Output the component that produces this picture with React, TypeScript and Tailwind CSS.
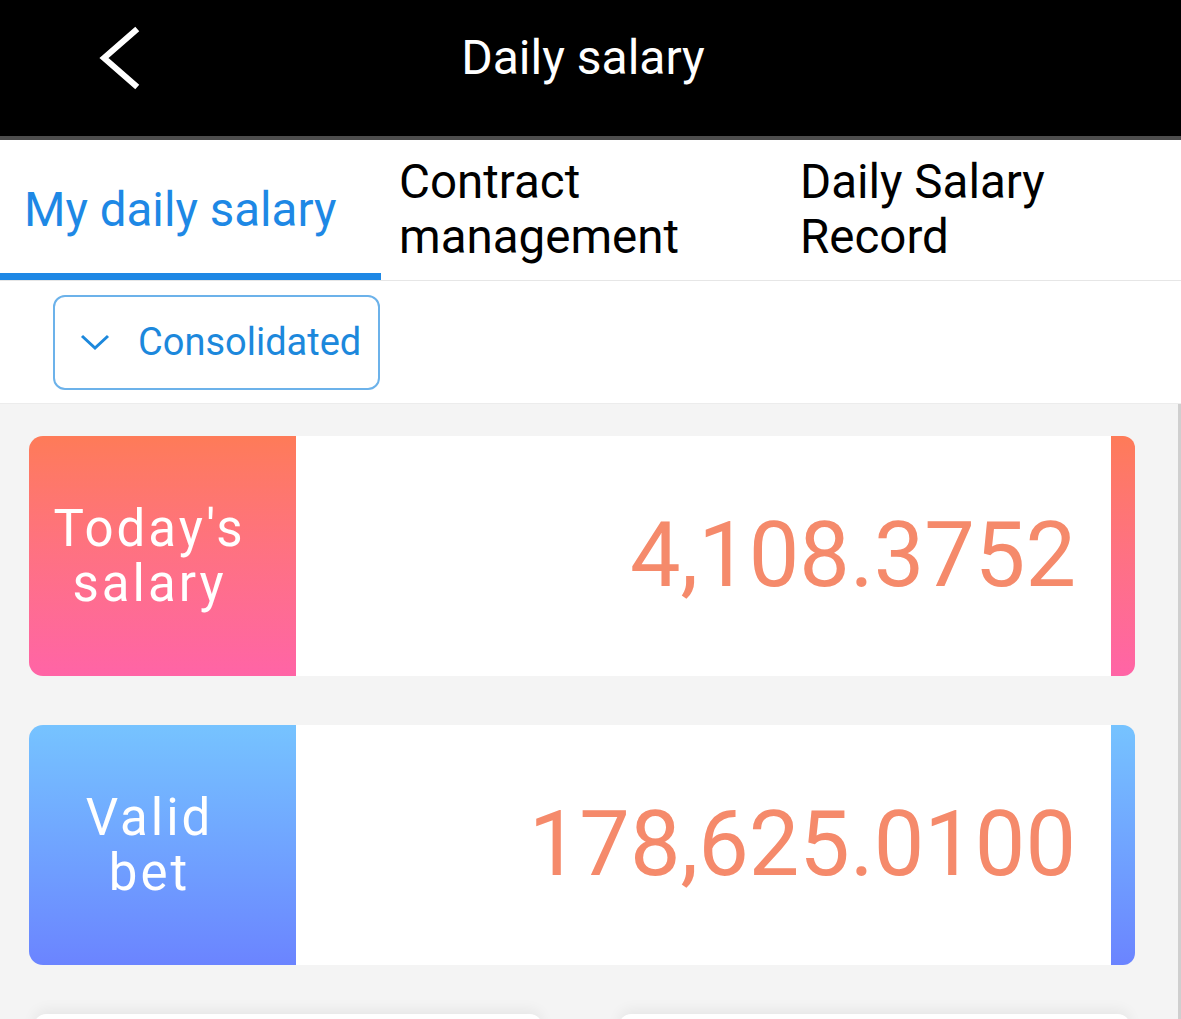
import React from "react";

const cards = [
  {
    label: ["Today's", "salary"],
    value: "4,108.3752",
    grad: "bg-gradient-to-b from-[#fe7b58] to-[#ff64a6]",
  },
  {
    label: ["Valid", "bet"],
    value: "178,625.0100",
    grad: "bg-gradient-to-b from-[#76c3ff] to-[#6b84ff]",
  },
];

export default function App() {
  return (
    <div className="w-[1181px] h-[1019px] overflow-hidden bg-[#f4f4f4] font-['Roboto','Liberation_Sans',sans-serif] flex flex-col">
      {/* header */}
      <div className="h-[136px] shrink-0 bg-black relative flex items-center justify-center pb-[20px] pr-[15px]">
        <svg className="absolute left-[96px] top-[24px]" width="48" height="68" viewBox="0 0 48 68" fill="none">
          <path d="M39 7 L8 34 L39 61" stroke="white" strokeWidth="6" strokeLinecap="square" strokeLinejoin="miter" />
        </svg>
        <h1 className="text-white text-[48px] leading-none">Daily salary</h1>
      </div>
      <div className="h-[4px] shrink-0 bg-[#4d4d4d]" />

      {/* tabs */}
      <div className="h-[141px] shrink-0 bg-white flex border-b border-[#e6e6e6]">
        <div className="w-[381px] relative flex items-center pl-[24px]">
          <span className="text-[#1e88e5] text-[47.5px] leading-[55px]">My daily salary</span>
          <div className="absolute left-0 right-0 bottom-0 h-[7px] bg-[#1e88e5]" />
        </div>
        <div className="w-[400px] flex items-center pl-[18px]">
          <span className="text-black text-[47.5px] leading-[55px]">Contract<br />management</span>
        </div>
        <div className="flex-1 flex items-center pl-[19px]">
          <span className="text-black text-[47.5px] leading-[55px]">Daily Salary<br />Record</span>
        </div>
      </div>

      {/* filter */}
      <div className="h-[123px] shrink-0 bg-white border-b border-[#ececec] flex items-center pl-[53px]">
        <button className="w-[327px] h-[95px] rounded-[12px] border-2 border-[#6cb2ea] flex items-center pl-[25px] gap-[28px]">
          <svg width="30" height="18" viewBox="0 0 30 18" fill="none">
            <path d="M2 3 L15 15 L28 3" stroke="#1c88dc" strokeWidth="3" />
          </svg>
          <span className="text-[#1c88dc] text-[38px] leading-none">Consolidated</span>
        </button>
      </div>

      {/* content */}
      <div className="flex-1 border-r-[3px] border-[#cfcfcf] border-b-2 pl-[29px] pr-[43px] pt-[32px] flex flex-col gap-[49px] relative">
        {cards.map((c) => (
          <div key={c.value} className="h-[240px] flex shrink-0">
            <div className={`w-[267px] rounded-l-[14px] ${c.grad} flex items-center justify-center pr-[26px]`}>
              <span className="text-white text-[51px] leading-[55px] tracking-[3px] text-center">
                {c.label[0]}
                <br />
                {c.label[1]}
              </span>
            </div>
            <div className="flex-1 bg-white flex items-center justify-end pr-[35px]">
              <span className="text-[#f58a6b] text-[90px] leading-none">{c.value}</span>
            </div>
            <div className={`w-[24px] rounded-r-[12px] ${c.grad}`} />
          </div>
        ))}
        <div className="flex gap-[77px] px-[5px] shrink-0">
          <div className="w-[508px] h-[40px] bg-white rounded-t-[12px] shadow-[0_-4px_14px_rgba(0,0,0,0.06)]" />
          <div className="w-[511px] h-[40px] bg-white rounded-t-[12px] shadow-[0_-4px_14px_rgba(0,0,0,0.06)]" />
        </div>
      </div>
    </div>
  );
}
